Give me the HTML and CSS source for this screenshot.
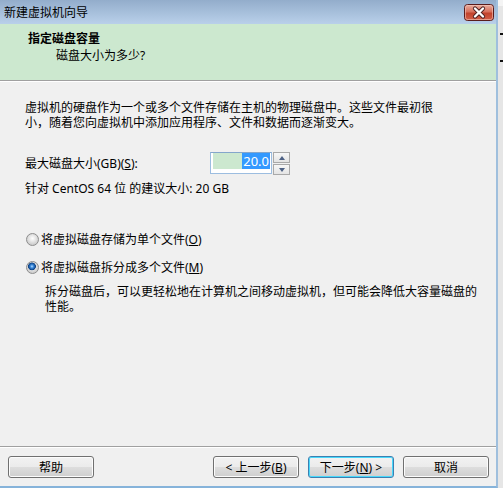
FILE: index.html
```html
<!DOCTYPE html>
<html lang="zh-CN">
<head>
<meta charset="utf-8">
<title>新建虚拟机向导</title>
<link rel="stylesheet" href="styles.css">
</head>
<body>
<div class="screen">
  <div class="window">
    <div class="titlebar">
      <span class="title">新建虚拟机向导</span>
      <div class="close">
        <svg width="30" height="17" viewBox="0 0 30 17">
          <defs>
            <linearGradient id="cg" x1="0" y1="0" x2="0" y2="1">
              <stop offset="0" stop-color="#eab0a2"/>
              <stop offset="0.45" stop-color="#d7705c"/>
              <stop offset="0.55" stop-color="#c2432c"/>
              <stop offset="1" stop-color="#d2604a"/>
            </linearGradient>
          </defs>
          <rect x="0.5" y="0.5" width="29" height="16" rx="3" fill="url(#cg)" stroke="#5a1c1c"/>
          <rect x="1.5" y="1.5" width="27" height="14" rx="2" fill="none" stroke="#f3c8bd" stroke-opacity="0.6"/>
          <path d="M11 4.5 L19 12.5 M19 4.5 L11 12.5" stroke="#4a2020" stroke-width="4.2" stroke-linecap="round"/>
          <path d="M11 4.5 L19 12.5 M19 4.5 L11 12.5" stroke="#ffffff" stroke-width="2.4" stroke-linecap="round"/>
        </svg>
      </div>
    </div>
    <div class="header">
      <div class="h-title">指定磁盘容量</div>
      <div class="h-sub">磁盘大小为多少?</div>
    </div>
    <div class="content">
      <p class="intro">虚拟机的硬盘作为一个或多个文件存储在主机的物理磁盘中。这些文件最初很<br>小，随着您向虚拟机中添加应用程序、文件和数据而逐渐变大。</p>
      <div class="size-row">
        <span class="size-label">最大磁盘大小(GB)(<u>S</u>):</span>
        <div class="spin">
          <div class="spin-input">
            <span class="fill"></span><span class="sel">20.0</span>
          </div>
          <div class="spin-btns">
            <div class="spin-btn"><span class="tri-up"></span></div>
            <div class="spin-btn"><span class="tri-down"></span></div>
          </div>
        </div>
      </div>
      <p class="hint">针对 CentOS 64 位 的建议大小: 20 GB</p>
      <div class="radio first"><span class="dot"></span><span>将虚拟磁盘存储为单个文件(<u>O</u>)</span></div>
      <div class="radio second"><span class="dot checked"></span><span>将虚拟磁盘拆分成多个文件(<u>M</u>)</span></div>
      <p class="desc">拆分磁盘后，可以更轻松地在计算机之间移动虚拟机，但可能会降低大容量磁盘的<br>性能。</p>
    </div>
    <div class="footer">
      <div class="btn">帮助</div>
      <div class="btn-group">
        <div class="btn">&lt; 上一步(<u>B</u>)</div>
        <div class="btn default">下一步(<u>N</u>) &gt;</div>
        <div class="btn">取消</div>
      </div>
    </div>
  </div>
  <div class="edge">
    <span class="edge-top"></span>
    <span class="tick t1"></span>
    <span class="tick t2"></span>
  </div>
</div>
</body>
</html>
```
FILE: styles.css
```css
html, body {
  margin: 0;
  padding: 0;
}
body {
  background: #ffffff;
  font-family: "Noto Sans", "Noto Sans CJK SC", sans-serif;
  font-size: 12px;
  color: #000;
}
.screen {
  display: flex;
  width: 503px;
  height: 491px;
  overflow: hidden;
}
.window {
  width: 498px;
  height: 488px;
  box-sizing: border-box;
  display: flex;
  flex-direction: column;
  background: #f0f0f0;
  border-right: 2px solid #9fbfdd;
  border-bottom: 2px solid #86b3da;
}
.titlebar {
  height: 24px;
  flex: none;
  display: flex;
  align-items: center;
  justify-content: space-between;
  background: linear-gradient(#93adcb, #b9d0ea);
  padding: 0 2px 0 4px;
}
.title {
  line-height: 16px;
  margin-top: 2px;
}
.close {
  display: flex;
  height: 17px;
  margin-top: 1px;
}
.header {
  height: 57px;
  flex: none;
  box-sizing: border-box;
  background: #cce8cf;
  border-bottom: 1px solid #a0a0a0;
  padding: 7px 0 0 28px;
}
.h-title {
  font-weight: bold;
  line-height: 16px;
}
.h-sub {
  line-height: 16px;
  padding-left: 28px;
  margin-top: 1px;
}
.content {
  flex: 1;
  border-top: 1px solid #ffffff;
  padding: 18px 0 0 25px;
}
.content p {
  margin: 0;
  line-height: 15px;
  white-space: nowrap;
}
.size-row {
  margin-top: 22px;
  height: 23px;
  display: flex;
  align-items: center;
}
.size-label {
  width: 185px;
  line-height: 15px;
}
.spin {
  display: flex;
  height: 23px;
}
.spin-input {
  width: 62px;
  height: 22px;
  box-sizing: border-box;
  border: 1px solid #9cbde0;
  border-top-color: #84a6cb;
  background: #fff;
  display: flex;
  align-items: flex-start;
  padding: 0 1px 0 2px;
}
.fill {
  flex: 1;
  height: 16px;
  background: #cce8cf;
}
.sel {
  height: 16px;
  background: #3399ff;
  color: #fff;
  font-size: 13px;
  line-height: 16px;
  padding: 0 1px 0 1px;
}
.spin-btns {
  width: 17px;
  margin-left: 1px;
  display: flex;
  flex-direction: column;
  gap: 1px;
}
.spin-btn {
  flex: 1;
  box-sizing: border-box;
  border: 1px solid #a9a9a9;
  background: linear-gradient(#f7f7f7, #e4e4e4);
  display: flex;
  align-items: center;
  justify-content: center;
}
.tri-up {
  width: 0;
  height: 0;
  border-left: 3.5px solid transparent;
  border-right: 3.5px solid transparent;
  border-bottom: 4px solid #4d6185;
}
.tri-down {
  width: 0;
  height: 0;
  border-left: 3.5px solid transparent;
  border-right: 3.5px solid transparent;
  border-top: 4px solid #4d6185;
}
.content .hint {
  margin-top: 6px;
}
.radio {
  display: flex;
  align-items: center;
  gap: 2px;
  line-height: 15px;
  padding-left: 1px;
}
.radio.first {
  margin-top: 36px;
}
.radio.second {
  margin-top: 13px;
}
.dot {
  width: 13px;
  height: 13px;
  box-sizing: border-box;
  border-radius: 50%;
  border: 1px solid #8d8d8d;
  background: radial-gradient(circle at 50% 40%, #ffffff 0, #e8e8e8 3px, #cfcfcf 6px);
}
.dot.checked {
  background:
    radial-gradient(circle at 45% 40%, #bfe0ff 0, #3f8ee0 1.5px, #17569f 3px, #0e3f80 3.6px, transparent 4.2px),
    radial-gradient(circle at 50% 40%, #ffffff 0, #e8e8e8 3px, #cfcfcf 6px);
}
.content .desc {
  margin-top: 9px;
  padding-left: 20px;
}
.footer {
  height: 40px;
  flex: none;
  box-sizing: border-box;
  border-top: 1px solid #a0a0a0;
  box-shadow: inset 0 1px #ffffff;
  padding: 9px 7px 0 8px;
  display: flex;
  align-items: flex-start;
}
.btn-group {
  margin-left: auto;
  display: flex;
  gap: 9px;
}
.btn {
  width: 86px;
  height: 22px;
  box-sizing: border-box;
  border: 1px solid #707070;
  border-radius: 3px;
  background: linear-gradient(#f2f2f2 0, #ebebeb 50%, #dddddd 51%, #cfcfcf 100%);
  box-shadow: inset 0 0 0 1px #fcfcfc;
  display: flex;
  align-items: center;
  justify-content: center;
  line-height: 15px;
}
.btn.default {
  border-color: #3c7fb1;
  box-shadow: inset 0 0 0 1px #48d8fb;
  background: linear-gradient(#eaf6fd 0, #d9f0fc 50%, #bee6fd 51%, #a7d9f5 100%);
  background: linear-gradient(#f2f2f2 0, #ebebeb 50%, #dddddd 51%, #cfcfcf 100%);
}
.edge {
  flex: 1;
  display: flex;
  flex-direction: column;
  align-items: flex-end;
  background: #e6e6e6;
  height: 488px;
}
.edge-top {
  align-self: stretch;
  height: 6px;
  background: #f4f4f4;
}
.tick {
  width: 3px;
  height: 2px;
  background: #111;
}
.t1 {
  margin-top: 27px;
}
.t2 {
  margin-top: 25px;
}
```
